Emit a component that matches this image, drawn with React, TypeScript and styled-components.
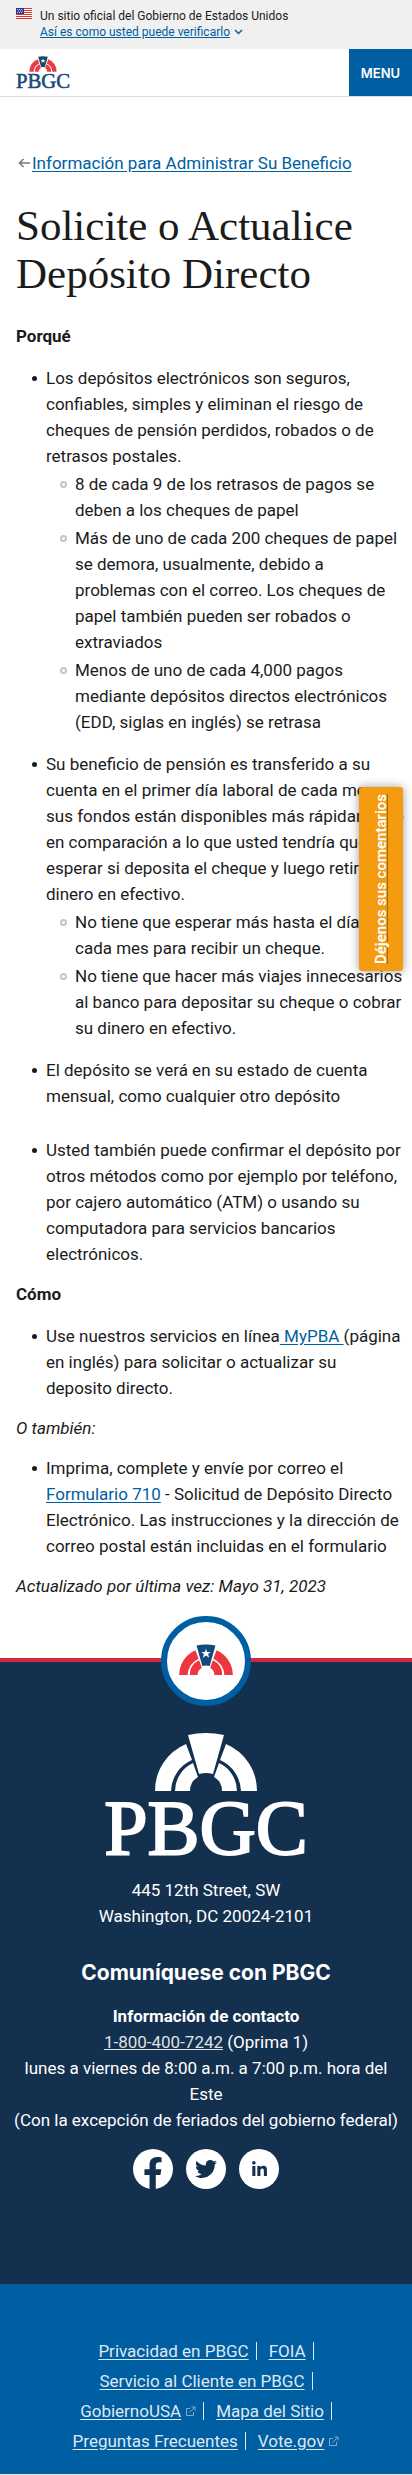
import React from 'react';
import styled, { createGlobalStyle } from 'styled-components';
import { FaFacebookF, FaLinkedinIn, FaTwitter } from 'react-icons/fa';

const color = {
  ink: '#1b1b1b',
  link: '#005ea2',
  navy: '#14304f',
  red: '#d22840',
  orange: '#f49b10',
};

const GlobalStyle = createGlobalStyle`
  *, *::before, *::after { box-sizing: border-box; }
  body {
    margin: 0;
    background: #fff;
    color: ${color.ink};
    font: 17px/26px Roboto, 'Liberation Sans', sans-serif;
  }
`;

const Page = styled.div`
  position: relative;
`;

const Banner = styled.div`
  display: flex;
  gap: 8px;
  padding: 8px 16px 9px;
  background: #f0f0f0;
  font-size: 12px;
  line-height: 16px;
`;

const BannerText = styled.p`
  margin: 0;
`;

const BannerButton = styled.button`
  display: flex;
  align-items: center;
  gap: 4px;
  padding: 0;
  border: 0;
  background: none;
  color: ${color.link};
  font: inherit;
  text-decoration: underline;
  cursor: pointer;
`;

const Header = styled.header`
  display: flex;
  justify-content: space-between;
  height: 48px;
  border-bottom: 1px solid #dcdee0;
`;

const HomeLink = styled.a`
  padding: 7px 16px;
`;

const MenuButton = styled.button`
  width: 63px;
  border: 0;
  background: ${color.link};
  color: #fff;
  font: 600 13px/16px Inter, sans-serif;
  cursor: pointer;
`;

const Main = styled.main`
  padding: 53px 4px 45px 16px;
`;

const Link = styled.a`
  color: ${color.link};
  text-underline-offset: 2px;
`;

const BackRow = styled.nav`
  display: flex;
  align-items: center;
  gap: 2px;
  padding-left: 2px;
`;

const Title = styled.h1`
  margin: 26px 0 25px;
  font: 400 43px/48px 'Liberation Serif', serif;
`;

const SectionTitle = styled.h2`
  margin: 14px 0 16px;
  font-size: 17px;
  line-height: 26px;
`;

const Note = styled.p`
  margin: 14px 0;
  font-style: italic;
`;

const List = styled.ul`
  margin: 0;
  padding: 0 0 0 30px;
  list-style: none;
`;

const Item = styled.li<{ $gap?: number }>`
  position: relative;
  margin-bottom: ${(p) => p.$gap ?? 16}px;
  &:last-child { margin-bottom: 0; }
  &::before {
    content: '';
    position: absolute;
    top: 11px;
    left: -14px;
    width: 5px;
    height: 5px;
    border-radius: 50%;
    background: ${color.ink};
  }
`;

const SubList = styled(List)`
  padding-left: 29px;
`;

const SubItem = styled.li`
  position: relative;
  margin-top: 2px;
  &::before {
    content: '';
    position: absolute;
    top: 10px;
    left: -15px;
    width: 7px;
    height: 7px;
    border: 2px solid #c2c4c6;
    border-radius: 50%;
  }
`;

const FeedbackTab = styled.a`
  position: absolute;
  top: 787px;
  right: 9px;
  display: flex;
  align-items: center;
  justify-content: center;
  width: 44px;
  height: 184px;
  border-radius: 3px;
  background: ${color.orange};
  box-shadow: 0 0 10px rgba(0, 0, 0, 0.4);
  color: #fff;
  font-size: 15px;
  font-weight: 600;
  text-decoration: underline #8a6a3c;
  writing-mode: sideways-lr;
  white-space: nowrap;
`;

const Footer = styled.footer`
  color: #fff;
  text-align: center;
`;

const FooterMain = styled.div`
  position: relative;
  display: flex;
  flex-direction: column;
  align-items: center;
  padding: 70px 12px 95px;
  border-top: 4px solid ${color.red};
  background: ${color.navy};
`;

const Emblem = styled.a`
  position: absolute;
  top: -46px;
  display: flex;
  justify-content: center;
  width: 90px;
  height: 90px;
  padding-top: 22px;
  border: 6px solid ${color.link};
  border-radius: 50%;
  background: #fff;
`;

const Address = styled.address`
  margin-top: 21px;
  font-style: normal;
`;

const FooterTitle = styled.h2`
  margin: 31px 0 17px;
  font: 700 21px/26px Inter, sans-serif;
`;

const Contact = styled.p`
  margin: 0;
`;

const PhoneLink = styled.a`
  color: #dfe1e2;
`;

const SocialRow = styled.div`
  display: flex;
  gap: 13px;
  margin-top: 16px;
`;

const SocialLink = styled.a<{ $low?: boolean }>`
  display: flex;
  align-items: ${(p) => (p.$low ? 'flex-end' : 'center')};
  justify-content: center;
  width: 40px;
  height: 40px;
  border-radius: 50%;
  background: #fff;
  color: ${color.navy};
`;

const FooterLinks = styled.nav`
  display: flex;
  justify-content: center;
  padding: 52px 16px 18px;
  border-bottom: 1px solid #dfe8f0;
  background: ${color.link};
`;

const LinkList = styled.ul`
  display: flex;
  flex-wrap: wrap;
  justify-content: center;
  column-gap: 12px;
  max-width: 300px;
  margin: 0;
  padding: 0;
  list-style: none;
`;

const LinkItem = styled.li`
  display: flex;
  align-items: center;
  height: 30px;
  &:not(:last-child)::after {
    content: '';
    width: 1px;
    height: 18px;
    margin-left: 7px;
    background: #dfe8f0;
  }
`;

const FooterLink = styled.a`
  display: flex;
  align-items: center;
  gap: 4px;
  color: #dfe8f0;
  text-underline-offset: 2px;
`;

function ArchShape({ wedge, arc, star }: { wedge: string; arc: string; star?: boolean }) {
  const half = (
    <>
      <path d="M-51 0A51 51 0 0 1-20-47L-14-31A35 35 0 0 0-35 0Z" />
      <path d="M-31 0A31 31 0 0 1-13-28L-8-14A16 16 0 0 0-16 0Z" />
    </>
  );
  return (
    <g>
      <g fill={arc}>{half}</g>
      <g fill={arc} transform="scale(-1 1)">{half}</g>
      <path fill={wedge} d="M-18-56Q0-60 18-56L7-17Q0-19-7-17Z" />
      {star && (
        <path
          fill="#fff"
          d="M0-50L2-44L9-44L4-40L6-33L0-37L-6-33L-4-40L-9-44L-2-44Z"
        />
      )}
    </g>
  );
}

function Logo({ width, height, text, arc, wedge, star }: {
  width: number; height: number; text: string; arc: string; wedge: string; star?: boolean;
}) {
  return (
    <svg width={width} height={height} viewBox="-100 -59 200 124" overflow="visible" role="img" aria-label="PBGC">
      <ArchShape wedge={wedge} arc={arc} star={star} />
      <text
        y="63"
        textAnchor="middle"
        fontFamily="Liberation Serif, serif"
        fontSize="78"
        fill={text}
        stroke={text}
        strokeWidth="2"
      >
        PBGC
      </text>
    </svg>
  );
}

function Flag() {
  return (
    <svg width="16" height="11" viewBox="0 0 16 11" aria-hidden="true">
      <rect width="16" height="11" fill="#fff" />
      {[0, 2, 4, 6, 8, 10].map((y) => (
        <rect key={y} y={y} width="16" height="1" fill="#d83b2f" />
      ))}
      <rect width="8" height="6" fill="#2a3690" />
      <path d="M1 1.5h6M2 3h6M1 4.5h6" stroke="#fff" strokeWidth=".8" strokeDasharray="1 1" />
    </svg>
  );
}

function ExternalIcon() {
  return (
    <svg width="11" height="11" viewBox="0 0 11 11" fill="none" stroke="#8aa7c4" aria-hidden="true">
      <path d="M5 2.5H1.5v7h7V6M4.500 6.500L10 1M6.500 1H10v3.500" />
    </svg>
  );
}

const footerLinks = [
  { label: 'Privacidad en PBGC' },
  { label: 'FOIA' },
  { label: 'Servicio al Cliente en PBGC' },
  { label: 'GobiernoUSA', external: true },
  { label: 'Mapa del Sitio' },
  { label: 'Preguntas Frecuentes' },
  { label: 'Vote.gov', external: true },
];

export default function App() {
  return (
    <Page>
      <GlobalStyle />
      <Banner>
        <Flag />
        <div>
          <BannerText>Un sitio oficial del Gobierno de Estados Unidos</BannerText>
          <BannerButton type="button">
            Así es como usted puede verificarlo
            <svg width="9" height="6" viewBox="0 0 9 6" fill="none" stroke={color.link} strokeWidth="1.500" aria-hidden="true">
              <path d="M1 1l3.500 3.500L8 1" />
            </svg>
          </BannerButton>
        </div>
      </Banner>
      <Header>
        <HomeLink href="#">
          <Logo width={54} height={33} text="#17497b" arc="#ea3c46" wedge="#0f4c66" star />
        </HomeLink>
        <MenuButton type="button">MENU</MenuButton>
      </Header>

      <Main>
        <BackRow>
          <svg width="12" height="10" viewBox="0 0 12 10" fill="none" stroke="#71767a" strokeWidth="1.500" aria-hidden="true">
            <path d="M12 5H1.500M5.500 1l-4 4 4 4" />
          </svg>
          <Link href="#">Información para Administrar Su Beneficio</Link>
        </BackRow>
        <Title>Solicite o Actualice Depósito Directo</Title>

        <SectionTitle>Porqué</SectionTitle>
        <List>
          <Item>
            Los depósitos electrónicos son seguros, confiables, simples y eliminan el riesgo de
            cheques de pensión perdidos, robados o de retrasos postales.
            <SubList>
              <SubItem>8 de cada 9 de los retrasos de pagos se deben a los cheques de papel</SubItem>
              <SubItem>
                Más de uno de cada 200 cheques de papel se demora, usualmente, debido a
                <br />
                problemas con el correo. Los cheques de papel también pueden ser robados o
                extraviados
              </SubItem>
              <SubItem>
                Menos de uno de cada 4,000 pagos mediante depósitos directos electrónicos (EDD,
                siglas en inglés) se retrasa
              </SubItem>
            </SubList>
          </Item>
          <Item>
            Su beneficio de pensión es transferido a su cuenta en el primer día laboral de cada mes y
            sus fondos están disponibles más rápidamente en comparación a lo que usted tendría que
            <br />
            esperar si deposita el cheque y luego retira su dinero en efectivo.
            <SubList>
              <SubItem>No tiene que esperar más hasta el día 1 de cada mes para recibir un cheque.</SubItem>
              <SubItem>
                No tiene que hacer más viajes innecesarios al banco para depositar su cheque o cobrar
                su dinero en efectivo.
              </SubItem>
            </SubList>
          </Item>
          <Item $gap={28}>El depósito se verá en su estado de cuenta mensual, como cualquier otro depósito</Item>
          <Item>
            Usted también puede confirmar el depósito por otros métodos como por ejemplo por
            teléfono, por cajero automático (ATM) o usando su computadora para servicios bancarios
            electrónicos.
          </Item>
        </List>

        <SectionTitle>Cómo</SectionTitle>
        <List>
          <Item>
            Use nuestros servicios en línea<Link href="#"> MyPBA </Link>(página en inglés) para
            solicitar o actualizar su
            <br />
            deposito directo.
          </Item>
        </List>
        <Note>O también:</Note>
        <List>
          <Item>
            Imprima, complete y envíe por correo el <Link href="#">Formulario 710</Link> - Solicitud
            de Depósito Directo Electrónico. Las instrucciones y la dirección de correo postal están
            incluidas en el formulario
          </Item>
        </List>
        <Note>Actualizado por última vez: Mayo 31, 2023</Note>
      </Main>

      <Footer>
        <FooterMain>
          <Emblem href="#" aria-label="Volver arriba">
            <svg width="54" height="31" viewBox="-51 -59 102 59" aria-hidden="true">
              <ArchShape wedge="#0f4c7c" arc="#ee3640" star />
            </svg>
          </Emblem>
          <Logo width={200} height={124} text="#fff" arc="#fff" wedge="#fff" />
          <Address>
            445 12th Street, SW
            <br />
            Washington, DC 20024-2101
          </Address>
          <FooterTitle>Comuníquese con PBGC</FooterTitle>
          <Contact>
            <strong>Información de contacto</strong>
            <br />
            <PhoneLink href="tel:18004007242">1-800-400-7242</PhoneLink> (Oprima 1)
            <br />
            lunes a viernes de 8:00 a.m. a 7:00 p.m. hora del
            <br />
            Este
            <br />
            (Con la excepción de feriados del gobierno federal)
          </Contact>
          <SocialRow>
            <SocialLink href="#" aria-label="Facebook" $low><FaFacebookF size={32} /></SocialLink>
            <SocialLink href="#" aria-label="Twitter"><FaTwitter size={22} /></SocialLink>
            <SocialLink href="#" aria-label="LinkedIn"><FaLinkedinIn size={17} /></SocialLink>
          </SocialRow>
        </FooterMain>
        <FooterLinks>
          <LinkList>
            {footerLinks.map((l) => (
              <LinkItem key={l.label}>
                <FooterLink href="#">
                  {l.label}
                  {l.external && <ExternalIcon />}
                </FooterLink>
              </LinkItem>
            ))}
          </LinkList>
        </FooterLinks>
      </Footer>

      <FeedbackTab href="#">Déjenos sus comentarios</FeedbackTab>
    </Page>
  );
}
